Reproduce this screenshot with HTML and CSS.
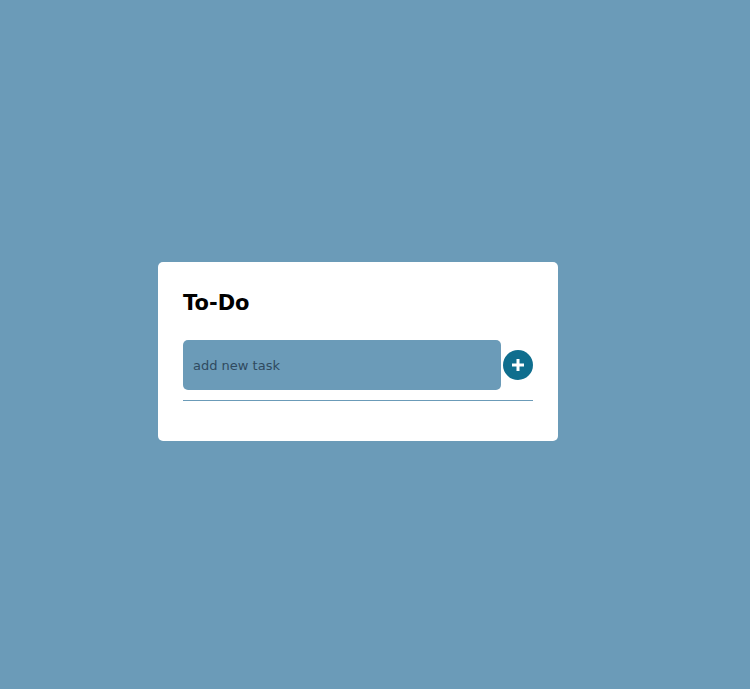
FILE: index.html
```html
<!DOCTYPE html>
<html>
<head>
<meta charset="utf-8">
<link rel="stylesheet" href="styles.css">
</head>
<body>
<div class="page">
  <div class="card">
    <h2 class="title">To-Do</h2>
    <div class="row">
      <div class="input">add new task</div>
      <button class="add" aria-label="add">
        <svg width="14" height="14" viewBox="0 0 14 14"><path d="M7 1v12M1 7h12" stroke="#fff" stroke-width="3"/></svg>
      </button>
    </div>
    <div class="list"></div>
  </div>
</div>
</body>
</html>
```
FILE: styles.css
```css
html, body {
  margin: 0;
  padding: 0;
  background: #6b9bb8;
  font-family: "DejaVu Sans", Verdana, sans-serif;
}
.page {
  padding: 262px 0 0 158px;
}
.card {
  width: 400px;
  box-sizing: border-box;
  background: #fff;
  border-radius: 5px;
  padding: 27px 25px 40px;
}
.title {
  margin: 0 0 23px;
  font-size: 21px;
  line-height: 28px;
  font-weight: bold;
  color: #000;
}
.row {
  display: flex;
  align-items: center;
  gap: 2px;
  padding-bottom: 10px;
  border-bottom: 1px solid #6b9bb8;
}
.input {
  flex: 0 0 318px;
  height: 50px;
  box-sizing: border-box;
  background: #6b9bb8;
  border-radius: 5px;
  padding-left: 10px;
  display: flex;
  align-items: center;
  font-size: 13px;
  color: #2f4a5f;
}
.add {
  width: 30px;
  height: 30px;
  border: none;
  border-radius: 50%;
  background: #0f6e8e;
  padding: 0;
  display: flex;
  align-items: center;
  justify-content: center;
}
```
